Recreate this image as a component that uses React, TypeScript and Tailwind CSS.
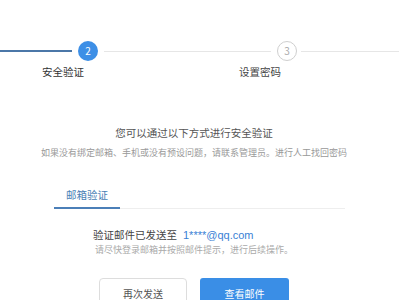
import React from "react";

const font = { fontFamily: '"Noto Sans CJK SC", "Liberation Sans", sans-serif' };

export default function App() {
  return (
    <div
      className="w-[399px] h-[300px] overflow-hidden bg-white"
      style={font}
    >
      {/* steps */}
      <div className="mt-[41px] flex h-5 items-center">
        <div className="h-[2px] w-[72px] bg-[#4b77a8]" />
        <div className="ml-[6px] flex h-5 w-5 items-center justify-center rounded-full bg-[#3d8fe6] text-[10px] leading-none text-white">
          2
        </div>
        <div className="ml-[6px] h-px w-[167px] bg-[#e6e6e6]" />
        <div className="ml-[6px] flex h-5 w-5 items-center justify-center rounded-full border border-[#cfcfcf] text-[10px] leading-none text-[#aaa]">
          3
        </div>
        <div className="ml-[4px] h-px flex-1 bg-[#e6e6e6]" />
      </div>
      <div className="mt-[4px] flex text-[10.5px] leading-[14px]">
        <span className="ml-[42px] w-[197px] text-[#333]">安全验证</span>
        <span className="text-[#444]">设置密码</span>
      </div>

      {/* heading */}
      <div className="mt-[47px] w-[388px] text-center text-[10.5px] leading-[14px] text-[#555]">
        您可以通过以下方式进行安全验证
      </div>
      <div className="mt-[7px] w-[388px] text-center text-[9px] leading-[12px] text-[#999]">
        如果没有绑定邮箱、手机或没有预设问题，请联系管理员。进行人工找回密码
      </div>

      {/* tab */}
      <div className="ml-[54px] mt-[29px] flex w-[291px] border-b border-[#eee]">
        <div className="-mb-px w-[66px] border-b-2 border-[#4b7fb8] pb-[5px] pl-[12px] text-[10.5px] leading-[14px] text-[#4a7fb5]">
          邮箱验证
        </div>
      </div>

      {/* sent info */}
      <div className="ml-[93px] mt-[19px] flex items-center text-[10.5px] leading-[14px] text-[#444]">
        <span>验证邮件已发送至</span>
        <span
          className="ml-[6px] text-[11px] text-[#3a7fd5]"
          style={{ fontFamily: '"Liberation Sans", Arial, sans-serif' }}
        >
          1****@qq.com
        </span>
      </div>
      <div className="ml-[95px] mt-[2px] text-[9px] leading-[12px] text-[#aaa]">
        请尽快登录邮箱并按照邮件提示，进行后续操作。
      </div>

      {/* buttons */}
      <div className="ml-[99px] mt-[22px] flex gap-[13px]">
        <button className="h-[30px] w-[88px] rounded-sm border border-[#ddd] bg-white text-[10px] text-[#555]">
          再次发送
        </button>
        <button className="h-[30px] w-[89px] rounded-[3px] bg-[#3a8ee6] text-[10px] text-white">
          查看邮件
        </button>
      </div>
    </div>
  );
}
